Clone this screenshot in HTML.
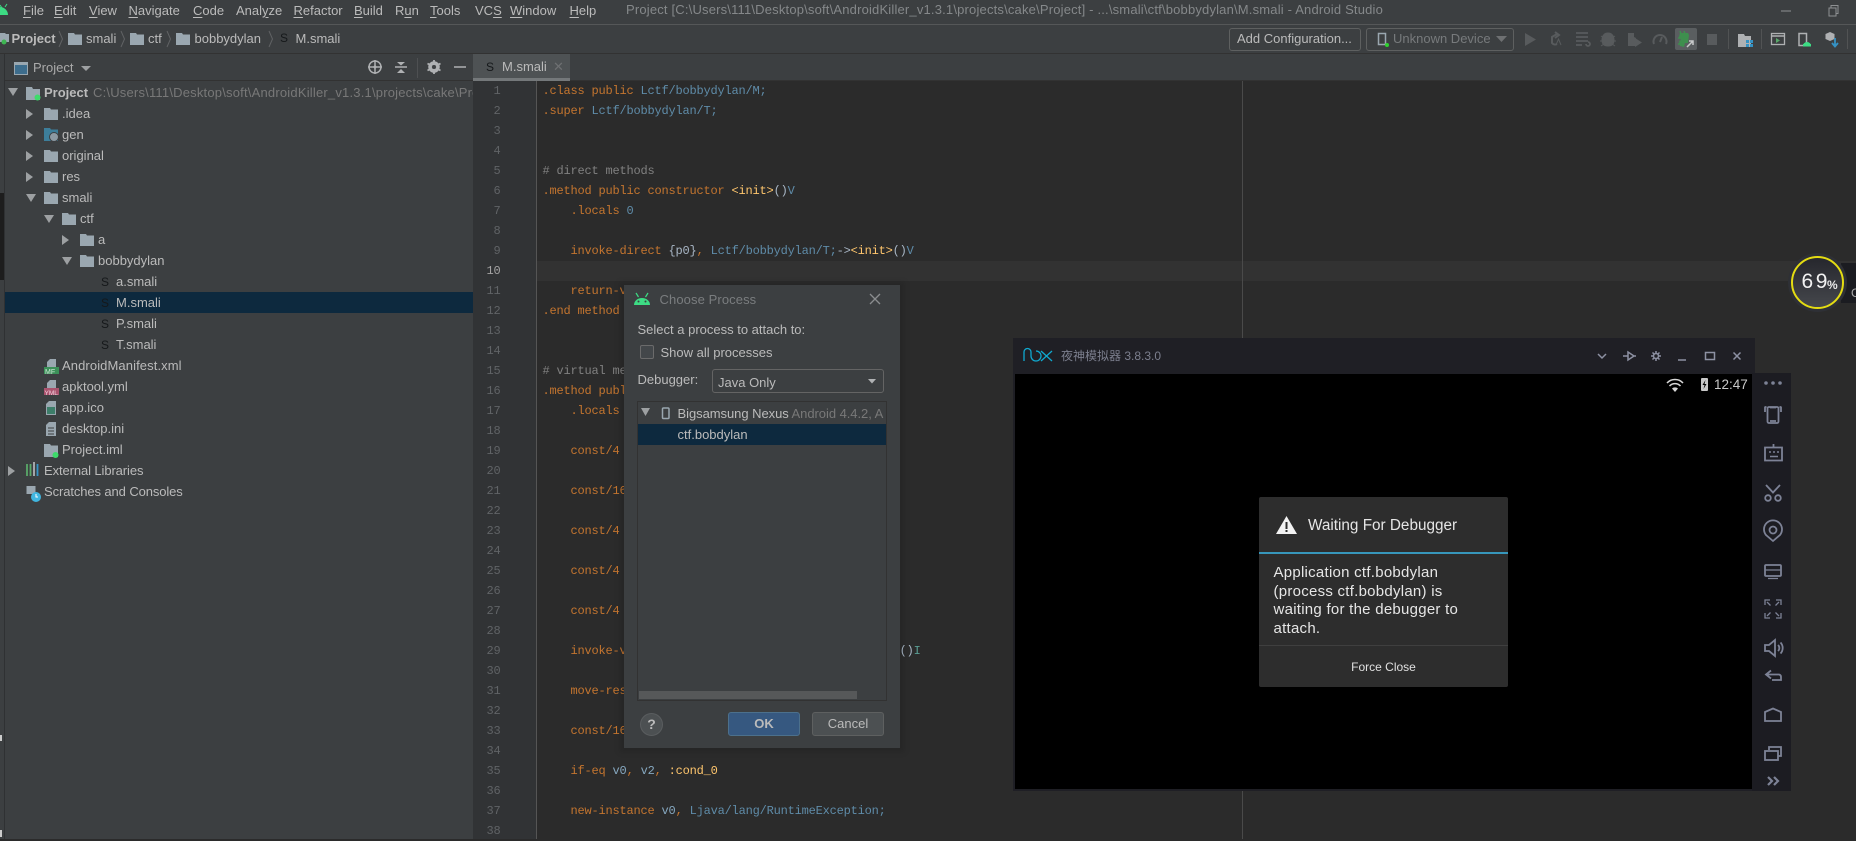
<!DOCTYPE html>
<html><head><meta charset="utf-8"><title>Android Studio</title>
<style>
html,body{margin:0;padding:0;background:#2b2b2b;}
body{width:1856px;height:839px;overflow:hidden;position:relative;font-family:"Liberation Sans","Noto Sans CJK SC",sans-serif;font-size:13px;color:#bbbbbb;}
.a{position:absolute;}
.t{position:absolute;white-space:pre;line-height:20px;height:20px;}
u{text-decoration:underline;text-underline-offset:2px;}
pre{margin:0;font-family:"Liberation Mono",monospace;font-size:12px;letter-spacing:-.2px;line-height:20px;position:absolute;}
.o{color:#c4752f}.b{color:#5f8ca9}.g{color:#808080}.y{color:#ffc66d}.w{color:#a9b7c6}.v{color:#86a8c0}
</style></head><body>

<!-- base panels -->
<div class="a" style="left:0;top:0;width:1856px;height:81px;background:#3c3f41"></div>
<div class="a" style="left:0;top:24px;width:1856px;height:1px;background:#555758"></div>
<div class="a" style="left:0;top:53px;width:1856px;height:1px;background:#323232"></div>
<div class="a" style="left:0;top:54px;width:473px;height:785px;background:#3c3f41"></div>
<div class="a" style="left:5px;top:80px;width:468px;height:1px;background:#323232"></div>
<div class="a" style="left:4px;top:54px;width:1px;height:785px;background:#2f3133"></div>
<div class="a" style="left:0;top:193px;width:4px;height:87px;background:#1d1d1d"></div>
<div class="a" style="left:0;top:735px;width:2px;height:6px;background:#ccc"></div>
<div class="a" style="left:0;top:830px;width:2px;height:7px;background:#ccc"></div>
<div class="a" style="left:473px;top:80px;width:1383px;height:1px;background:#323232"></div>
<div class="a" style="left:473px;top:81px;width:64px;height:758px;background:#313335"></div>
<div class="a" style="left:536px;top:81px;width:1px;height:758px;background:#555555"></div>
<div class="a" style="left:537px;top:261px;width:1319px;height:20px;background:#323232"></div>
<div class="a" style="left:1242px;top:81px;width:1px;height:758px;background:#4a4a4a"></div>

<!-- menu -->
<div class="t" style="left:23px;top:1px"><u>F</u>ile</div>
<div class="t" style="left:54px;top:1px"><u>E</u>dit</div>
<div class="t" style="left:89px;top:1px"><u>V</u>iew</div>
<div class="t" style="left:128.5px;top:1px"><u>N</u>avigate</div>
<div class="t" style="left:193px;top:1px"><u>C</u>ode</div>
<div class="t" style="left:236px;top:1px">Anal<u>y</u>ze</div>
<div class="t" style="left:293.5px;top:1px"><u>R</u>efactor</div>
<div class="t" style="left:354px;top:1px"><u>B</u>uild</div>
<div class="t" style="left:395px;top:1px">R<u>u</u>n</div>
<div class="t" style="left:430px;top:1px"><u>T</u>ools</div>
<div class="t" style="left:475px;top:1px">VC<u>S</u></div>
<div class="t" style="left:510px;top:1px"><u>W</u>indow</div>
<div class="t" style="left:569.5px;top:1px"><u>H</u>elp</div>
<div class="t" style="left:626px;top:0;color:#85888a;letter-spacing:.18px">Project [C:\Users\111\Desktop\soft\AndroidKiller_v1.3.1\projects\cake\Project] - ...\smali\ctf\bobbydylan\M.smali - Android Studio</div>

<!-- nav bar -->
<div class="t" style="left:11.5px;top:29px;font-weight:bold">Project</div>
<div class="t" style="left:86px;top:29px">smali</div>
<div class="t" style="left:148px;top:29px">ctf</div>
<div class="t" style="left:194.5px;top:29px">bobbydylan</div>
<div class="t" style="left:295.5px;top:29px">M.smali</div>
<div class="t" style="left:280px;top:28px;font-size:12px;color:#15181a">S</div>

<!-- toolbar -->
<div class="a" style="left:1229px;top:28px;width:130px;height:21px;border:1px solid #5e6060;border-radius:3px"></div>
<div class="t" style="left:1237px;top:29px;color:#bbb">Add Configuration...</div>
<div class="a" style="left:1366px;top:28px;width:146px;height:21px;border:1px solid #5e6060;border-radius:3px"></div>
<div class="t" style="left:1393px;top:29px;color:#777a7c">Unknown Device</div>
<div class="a" style="left:1675px;top:28px;width:22px;height:22px;background:#5a5e60;border-radius:2px"></div>

<!-- tool header -->
<div class="t" style="left:33px;top:58px;color:#aaa">Project</div>
<div class="a" style="left:473px;top:54px;width:97px;height:27px;background:#4e5254"></div>
<div class="a" style="left:473px;top:78px;width:97px;height:3px;background:#74787a"></div>
<div class="t" style="left:486px;top:57px;font-size:12px;color:#15181a">S</div>
<div class="t" style="left:502px;top:57px">M.smali</div>
<div class="t" style="left:553px;top:57px;font-size:13px;color:#6e7072">✕</div>

<!-- tree -->
<div class="a" style="left:5px;top:292px;width:468px;height:21px;background:#0d293e"></div>
<div class="a" style="left:0;top:83px;width:473px;height:20px;overflow:hidden">
<div class="t" style="left:44px;top:0;font-weight:bold">Project</div>
<div class="t" style="left:93px;top:0;color:#787878;letter-spacing:.2px">C:\Users\111\Desktop\soft\AndroidKiller_v1.3.1\projects\cake\Project</div>
</div>
<div class="t" style="left:62px;top:104px">.idea</div>
<div class="t" style="left:62px;top:125px">gen</div>
<div class="t" style="left:62px;top:146px">original</div>
<div class="t" style="left:62px;top:167px">res</div>
<div class="t" style="left:62px;top:188px">smali</div>
<div class="t" style="left:80px;top:209px">ctf</div>
<div class="t" style="left:98px;top:230px">a</div>
<div class="t" style="left:98px;top:251px">bobbydylan</div>
<div class="t" style="left:116px;top:272px">a.smali</div>
<div class="t" style="left:116px;top:293px">M.smali</div>
<div class="t" style="left:116px;top:314px">P.smali</div>
<div class="t" style="left:116px;top:335px">T.smali</div>
<div class="t" style="left:101px;top:272px;font-size:12px;color:#15181a">S</div>
<div class="t" style="left:101px;top:293px;font-size:12px;color:#15181a">S</div>
<div class="t" style="left:101px;top:314px;font-size:12px;color:#15181a">S</div>
<div class="t" style="left:101px;top:335px;font-size:12px;color:#15181a">S</div>
<div class="t" style="left:62px;top:356px;letter-spacing:.1px">AndroidManifest.xml</div>
<div class="t" style="left:62px;top:377px">apktool.yml</div>
<div class="t" style="left:62px;top:398px">app.ico</div>
<div class="t" style="left:62px;top:419px">desktop.ini</div>
<div class="t" style="left:62px;top:440px">Project.iml</div>
<div class="t" style="left:44px;top:461px;letter-spacing:-.1px">External Libraries</div>
<div class="t" style="left:44px;top:482px;letter-spacing:-.1px">Scratches and Consoles</div>

<!-- line numbers -->
<pre style="left:473px;top:81px;width:27.5px;text-align:right;color:#606366">1
2
3
4
5
6
7
8
9
<span style="color:#a4a3a3">10</span>
11
12
13
14
15
16
17
18
19
20
21
22
23
24
25
26
27
28
29
30
31
32
33
34
35
36
37
38</pre>

<!-- code -->
<pre style="left:542.5px;top:81px;color:#c4752f"><span class="o">.class public</span> <span class="b">Lctf/bobbydylan/M;</span>
<span class="o">.super</span> <span class="b">Lctf/bobbydylan/T;</span>


<span class="g"># direct methods</span>
<span class="o">.method public constructor</span> <span class="y">&lt;init&gt;</span><span class="w">()</span><span class="b">V</span>
    <span class="o">.locals</span> <span class="b">0</span>

    <span class="o">invoke-direct</span> <span class="w">{p0}</span><span class="o">,</span> <span class="b">Lctf/bobbydylan/T;</span><span class="w">-&gt;</span><span class="y">&lt;init&gt;</span><span class="w">()</span><span class="b">V</span>

    <span class="o">return-void</span>
<span class="o">.end method</span>


<span class="g"># virtual methods</span>
<span class="o">.method public</span>
    <span class="o">.locals</span>

    <span class="o">const/4</span>

    <span class="o">const/16</span>

    <span class="o">const/4</span>

    <span class="o">const/4</span>

    <span class="o">const/4</span>

    <span class="o">invoke-virtual</span>                                 <span class="w">()</span><span style="color:#5a9e94">I</span>

    <span class="o">move-result</span>

    <span class="o">const/16</span>

    <span class="o">if-eq</span> <span class="v">v0</span><span class="o">,</span> <span class="v">v2</span><span class="o">,</span> <span class="y">:cond_0</span>

    <span class="o">new-instance</span> <span class="v">v0</span><span class="o">,</span> <span class="b">Ljava/lang/RuntimeException;</span></pre>

<!-- dialog -->
<div class="a" style="left:620px;top:282px;width:284px;height:470px;background:rgba(0,0,0,.12);filter:blur(3px)"></div>
<div class="a" style="left:624px;top:285px;width:276px;height:463px;background:#3c3f41"></div>
<div class="t" style="left:659.5px;top:290px;color:#7a7d7f;letter-spacing:.1px">Choose Process</div>
<div class="t" style="left:637.5px;top:320px">Select a process to attach to:</div>
<div class="a" style="left:640px;top:345px;width:12px;height:12px;border:1px solid #6b6b6b;border-radius:2px;background:#43474a"></div>
<div class="t" style="left:660.5px;top:343px">Show all processes</div>
<div class="t" style="left:637.5px;top:370px">Debugger:</div>
<div class="a" style="left:712px;top:369px;width:170px;height:22px;border:1px solid #646464;border-radius:3px;background:#3c3f41"></div>
<div class="t" style="left:718px;top:373px">Java Only</div>
<div class="a" style="left:637px;top:401px;width:248px;height:298px;border:1px solid #323232;background:#3c3f41;overflow:hidden">
  <div class="a" style="left:0;top:22px;width:248px;height:21px;background:#0d293e"></div>
  <div class="t" style="left:39.5px;top:2px;letter-spacing:-.05px">Bigsamsung Nexus <span style="color:#787878">Android 4.4.2, A</span></div>
  <div class="t" style="left:39.5px;top:23px">ctf.bobdylan</div>
  <div class="a" style="left:1px;top:289px;width:218px;height:8px;background:#565859"></div>
</div>
<div class="a" style="left:728px;top:712px;width:70px;height:22px;background:#365880;border:1px solid #4c708c;border-radius:3px;color:#bbb;font-weight:bold;text-align:center;line-height:22px">OK</div>
<div class="a" style="left:812px;top:712px;width:70px;height:22px;background:#4c5052;border:1px solid #5e6060;border-radius:3px;color:#bbb;text-align:center;line-height:22px">Cancel</div>
<div class="a" style="left:640px;top:713px;width:21px;height:21px;background:#4c5052;border:1px solid #5a5d5f;border-radius:50%;color:#bbb;font-weight:bold;font-size:14px;text-align:center;line-height:21px">?</div>

<!-- circle -->
<div class="a" style="left:1841px;top:263px;width:15px;height:40px;background:#1b1c21"></div>
<div class="t" style="left:1851px;top:283px;color:#aaa;font-size:12px">C</div>
<div class="a" style="left:1788px;top:253px;width:59px;height:59px;border-radius:50%;background:#2e3036"></div>
<div class="a" style="left:1791px;top:256px;width:49px;height:49px;border:2px solid #e4dc12;border-radius:50%;background:linear-gradient(#26272d,#45474c)"></div>
<div class="t" style="left:1801.5px;top:272px;color:#f2f2f2;font-size:21px;letter-spacing:2.6px">69</div>
<div class="t" style="left:1827px;top:275px;color:#e8e8e8;font-size:12px;font-weight:bold">%</div>

<!-- nox -->
<div class="a" style="left:1013px;top:338px;width:742px;height:453px;background:#1f1f25"></div>
<div class="a" style="left:1752px;top:373px;width:39px;height:418px;background:#1c1c22"></div>
<div class="a" style="left:1015px;top:374px;width:737px;height:415px;background:#000"></div>
<div class="t" style="left:1061px;top:346px;font-size:12px;color:#7c7f8e">夜神模拟器 3.8.3.0</div>
<div class="t" style="left:1714px;top:375px;font-size:13.5px;color:#c8c8c8">12:47</div>

<div class="a" style="left:1259px;top:497px;width:249px;height:190px;background:#2d2d2d;border-radius:2px"></div>
<div class="a" style="left:1259px;top:552px;width:249px;height:2px;background:#3797bb"></div>
<div class="a" style="left:1259px;top:645px;width:249px;height:1px;background:#3f3f3f"></div>
<div class="t" style="left:1308px;top:516px;font-size:15.3px;color:#e6e6e6">Waiting For Debugger</div>
<div class="a" style="left:1273.5px;top:564px;width:230px;font-size:15px;letter-spacing:.26px;line-height:18.6px;color:#e6e6e6;white-space:pre">Application ctf.bobdylan
(process ctf.bobdylan) is
waiting for the debugger to
attach.</div>
<div class="t" style="left:1259px;width:249px;text-align:center;top:657px;font-size:12px;color:#e0e0e0">Force Close</div>

<!-- icon overlay -->
<svg class="a" style="left:0;top:0;pointer-events:none" width="1856" height="839" viewBox="0 0 1856 839">
<defs>
<path id="fo" d="M0 1h6l1 1.5h7V13H0z" fill="#9aa7b0"/>
<path id="r" d="M0 0l7 5-7 5z" fill="#9da0a2"/>
<path id="d" d="M0 0h10L5 8z" fill="#9da0a2"/>
<g id="doc"><path d="M6 0h6v8H3V3z" fill="#9aa7b0"/></g>
</defs>

<!-- top android -->
<path d="M0 15V7a8 8 0 0 1 8 8z" fill="#3ddc84"/>
<path d="M0 5l2 3M7 4l-2 3" stroke="#3ddc84" stroke-width="1" fill="none"/>
<!-- win buttons -->
<path d="M1781 11h10" stroke="#8e9092" stroke-width="1"/>
<path d="M1829 8h7v8h-7zM1831 8V5.500h7v8h-2" stroke="#8e9092" fill="none"/>

<!-- nav icons -->
<path d="M0 33h5l1 1h3v8H0z" fill="#9aa7b0"/><circle cx="4" cy="42" r="2.500" fill="#3eb552"/>
<g stroke="#606264" fill="none"><path d="M59 31l3.500 8-3.500 8M121 31l3.500 8-3.500 8M167 31l3.500 8-3.500 8M269 31l3.500 8-3.500 8"/></g>
<use href="#fo" x="68" y="32"/><use href="#fo" x="130" y="32"/><use href="#fo" x="176" y="32"/>

<!-- toolbar icons -->
<rect x="1378.500" y="33.500" width="7" height="11" fill="none" stroke="#9aa7b0" stroke-width="1.500"/><circle cx="1387" cy="45" r="2" fill="#2fd12f"/>
<path d="M1496 36h11l-5.500 6z" fill="#6e7072"/>
<path d="M1525 33l11 6.500-11 6.500z" fill="#585b5d"/>
<path d="M1557 34l-5 3v6a4 4 0 0 0 5 1M1555 32l4 3-4 3" stroke="#585b5d" stroke-width="2" fill="none"/><path d="M1556 45l2.500-6 2.500 6" stroke="#585b5d" fill="none"/>
<path d="M1576 33h12M1576 37h12M1576 41h12M1576 45h6M1586 44a2 2 0 1 0 2-2" stroke="#585b5d" stroke-width="1.800" fill="none"/>
<path d="M1608 33c4 0 6 3 6 7s-2 6-6 6-6-2-6-6 2-7 6-7zM1601 36l3 2M1615 36l-3 2M1600 41h3M1613 41h3M1601 46l3-2M1615 46l-3-2" fill="#585b5d" stroke="#585b5d"/>
<path d="M1628 33h6v4l2 1v8h-8z" fill="#585b5d"/><path d="M1635 38l7 4.500-7 4.500z" fill="#585b5d"/>
<path d="M1654 44a6.500 6.500 0 1 1 12 0M1660 42l2-5" stroke="#585b5d" stroke-width="2" fill="none"/>
<path d="M1680 33h8l1 2-1 8h-3l-1 4-4-1-1-5 2-1-2-3z" fill="#3e8f4e"/><path d="M1678 38h3M1678 44h3M1684 31l1 3M1680 31l1 3" stroke="#3e8f4e" stroke-width="1.500"/>
<path d="M1687 47l6-6M1689 41h4v4" stroke="#c8cacb" stroke-width="1.500" fill="none"/>
<rect x="1707" y="34" width="10" height="11" fill="#585b5d"/>
<path d="M1728.500 29v20M1761.500 29v20M1847.500 29v20" stroke="#515354"/>
<path d="M1738 34h6l1 2h6v11h-13z" fill="#afb1b3"/><rect x="1746" y="40" width="3" height="3" fill="#3592c4"/><rect x="1750" y="40" width="3" height="3" fill="#3592c4"/><rect x="1746" y="44" width="3" height="3" fill="#3592c4"/><rect x="1750" y="44" width="3" height="3" fill="#3592c4"/>
<rect x="1771.500" y="33.500" width="13" height="11" fill="none" stroke="#afb1b3" stroke-width="1.300"/><path d="M1771 36h14" stroke="#afb1b3" stroke-width="1.500"/><path d="M1776 38l4 2.500-4 2.500z" fill="#59a869"/>
<rect x="1799" y="33.500" width="7.500" height="12" fill="none" stroke="#afb1b3" stroke-width="1.500"/><path d="M1803 46a3.500 3.500 0 0 1 8 0z" fill="#3ddc84"/><rect x="1803" y="44" width="8" height="2.500" fill="#3ddc84"/>
<path d="M1830 32l4.500 2v5l-4.500 2-4.500-2v-5z" fill="#afb1b3"/><path d="M1835 38v8M1832 43l3 3.500 3-3.500" stroke="#3592c4" stroke-width="1.800" fill="none"/>

<!-- tool header icons -->
<rect x="14.500" y="62.500" width="13" height="12" fill="#3d6d8d" stroke="#9aa7b0"/><path d="M14 63h14v2H14z" fill="#9aa7b0"/>
<path d="M81 66h10l-5 5z" fill="#9da0a2"/>
<circle cx="375" cy="67" r="6" fill="none" stroke="#afb1b3" stroke-width="1.500"/><path d="M375 60v14M368 67h14" stroke="#afb1b3" stroke-width="1.500"/><circle cx="375" cy="67" r="1.500" fill="#afb1b3"/>
<path d="M395 67h12" stroke="#afb1b3" stroke-width="1.500"/><path d="M397 62h8l-4 3.500zM397 73h8l-4-4z" fill="#afb1b3"/>
<path d="M417.500 58v20" stroke="#4e5052"/>
<circle cx="434" cy="67" r="4" fill="none" stroke="#afb1b3" stroke-width="3.500"/><path d="M434 60v14M427.500 63.500l13 7M440.500 63.500l-13 7" stroke="#afb1b3" stroke-width="1.800"/><circle cx="434" cy="67" r="2" fill="#3c3f41"/>
<path d="M454 67h12" stroke="#afb1b3" stroke-width="1.500"/>

<!-- tree arrows -->
<use href="#d" x="8" y="88"/>
<use href="#r" x="26" y="109"/><use href="#r" x="26" y="130"/><use href="#r" x="26" y="151"/><use href="#r" x="26" y="172"/>
<use href="#d" x="26" y="194"/><use href="#d" x="44" y="215"/><use href="#r" x="62" y="235"/><use href="#d" x="62" y="257"/>
<use href="#r" x="8" y="466"/>

<!-- tree icons -->
<path d="M26 87h6l1 2h7v11H26z" fill="#9aa7b0"/><circle cx="37.500" cy="97.500" r="3" fill="#3ddc6a"/>
<use href="#fo" x="44" y="107"/>
<path d="M44 128h6l1 1.500h7V141H44z" fill="#3d7e9a"/><circle cx="54" cy="137" r="4.500" fill="#8d9aa3" stroke="#3c3f41"/>
<use href="#fo" x="44" y="149"/><use href="#fo" x="44" y="170"/><use href="#fo" x="44" y="191"/>
<use href="#fo" x="62" y="212"/><use href="#fo" x="80" y="233"/><use href="#fo" x="80" y="254"/>
<use href="#doc" x="44" y="359"/><rect x="44" y="367" width="15" height="7" fill="#3b9058"/><text x="45" y="374" font-family="Liberation Sans" font-size="7" fill="#cfe8d8">MF</text>
<use href="#doc" x="44" y="380"/><rect x="44" y="388" width="15" height="7" fill="#a9536e"/><text x="44.500" y="395" font-family="Liberation Sans" font-size="6.500" fill="#f0d0dc">YML</text>
<path d="M49 401h7v14H46v-11z" fill="#9aa7b0"/><rect x="47" y="407" width="8" height="7" fill="#3d7e6a"/>
<path d="M49 422h7v14H46v-11z" fill="#9aa7b0"/><path d="M48 428h6M48 431h6M48 434h6" stroke="#3c3f41"/>
<path d="M44 444h6l1 1.500h7V457H44z" fill="#9aa7b0"/><circle cx="55.500" cy="455" r="3" fill="#3ddc6a"/>
<path d="M27 464v12M30.500 464v12" stroke="#59a869" stroke-width="1.800"/><path d="M34 462v14" stroke="#afb1b3" stroke-width="1.800"/><path d="M37.500 464v12" stroke="#3592c4" stroke-width="1.800"/>
<rect x="26.500" y="486" width="9" height="8" fill="#9aa7b0"/><circle cx="36" cy="497" r="5" fill="#40b6e0"/><path d="M36 494v3h2" stroke="#fff" fill="none"/>

<!-- dialog icons -->
<path d="M634 305a8 7 0 0 1 16 0z" fill="#3ddc84"/><path d="M636 293l2.500 4M648 293l-2.500 4" stroke="#3ddc84" stroke-width="1.200"/><circle cx="638.500" cy="301.500" r="1" fill="#3c3f41"/><circle cx="645.500" cy="301.500" r="1" fill="#3c3f41"/>
<path d="M870 294l10 10M880 294l-10 10" stroke="#8a8d8f" stroke-width="1.300"/>
<path d="M868 379h8l-4 4.500z" fill="#b0b2b4"/>
<path d="M641 408h9l-4.500 8z" fill="#9da0a2"/>
<rect x="662.500" y="408" width="6.500" height="10.500" rx="1" fill="none" stroke="#9aa7b0" stroke-width="1.500"/>

<!-- nox logo & buttons -->
<path d="M1024 361v-9a3.500 3.500 0 0 1 7 0v4a5 5 0 1 0 5-5M1041 351l11 10M1052 351l-11 10" stroke="#10a8cf" stroke-width="1.300" fill="none"/>
<g stroke="#8d91a3" fill="none" stroke-width="1.500">
<path d="M1598 354l4 4 4-4"/>
<path d="M1623 356h5M1628 352v8l6-4zM1634 356h2"/>
<circle cx="1656" cy="356" r="2.500"/><path d="M1656 351v2M1656 359v2M1651 356h2M1659 356h2M1652.500 352.500l1.500 1.500M1658 358l1.500 1.500M1652.500 359.500l1.500-1.500M1658 354l1.500-1.500"/>
<path d="M1678 360h8"/>
<rect x="1705.500" y="352.500" width="9" height="7"/>
<path d="M1733.500 352.500l7 7M1740.500 352.500l-7 7"/>
</g>
<!-- status: wifi fan arcs + battery bolt -->
<path d="M1667 383a11 11 0 0 1 16 0M1669.500 386a7.500 7.500 0 0 1 11 0" stroke="#d8d8d8" stroke-width="1.500" fill="none"/><path d="M1672 388.500a4.500 4.500 0 0 1 6 0l-3 3.500z" fill="#d8d8d8"/>
<rect x="1701" y="378" width="7" height="13" rx="1" fill="#c8c8c8"/><path d="M1705.500 380l-3 5h2l-1 4 3-5h-2z" fill="#000"/>

<!-- warning -->
<path d="M1286.500 516l10.500 18h-21z" fill="#f2f2f2"/><rect x="1285.500" y="522" width="2" height="7" fill="#2d2d2d"/><rect x="1285.500" y="530" width="2" height="2" fill="#2d2d2d"/>

<!-- nox side icons -->
<g fill="none" stroke="#7d8296" stroke-width="1.800">
<g fill="#7d8296" stroke="none"><circle cx="1766" cy="383" r="1.800"/><circle cx="1773" cy="383" r="1.800"/><circle cx="1780" cy="383" r="1.800"/></g>
<rect x="1767.500" y="407" width="11" height="16" rx="1.500"/><path d="M1770 407.500h6M1770 421h6M1765 407v5M1781 407v5M1764.500 407h2M1779.500 407h2"/>
<path d="M1765 447.500h17v13h-17zM1773.500 447v-3"/><path d="M1769 452h2M1773 452h2M1777 452h2M1770 456.500h8" stroke-width="1.500"/>
<path d="M1766 485l7 7.500 7-7.500"/><circle cx="1768" cy="498" r="2.800"/><circle cx="1778" cy="498" r="2.800"/>
<path d="M1773 541l-7-6a9 9 0 1 1 14 0z"/><circle cx="1773" cy="530" r="3.500"/>
<rect x="1765" y="565" width="16" height="11" rx="1"/><path d="M1765 570h16M1768 578.500h10" stroke-width="1.300"/>
<path d="M1765 605v-5h5M1781 605v-5h-5M1765 613v5h5M1781 613v5h-5M1767 602l3.500 3.500M1779 602l-3.500 3.500M1767 616l3.500-3.500M1779 616l-3.500-3.500" stroke-width="1.300"/>
<path d="M1765 645h4l6-5v16l-6-5h-4zM1778 645a4 4 0 0 1 0 6M1780.500 642.500a8 8 0 0 1 0 11"/>
<path d="M1771 670.500l-5 4 5 4M1766 674.500h13a2.500 2.500 0 0 1 2 2.500v3h-9"/>
<path d="M1765 721v-9l8-3.500 8 3.500v9z"/>
<rect x="1765" y="751" width="13" height="9"/><path d="M1769 750v-3h12v9h-3"/>
<path d="M1768 777l4 4-4 4M1774 777l4 4-4 4" stroke-width="2.200"/>
</g>
</svg>
</body></html>
